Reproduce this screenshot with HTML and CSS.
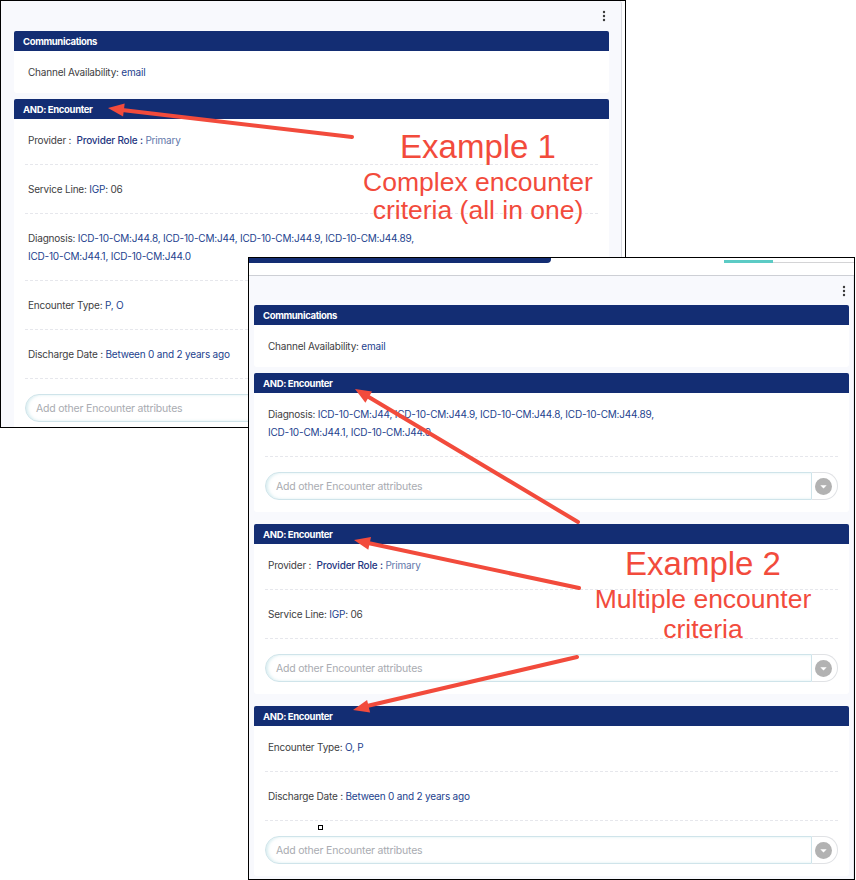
FILE: index.html
```html
<!DOCTYPE html>
<html lang="en">
<head>
<meta charset="utf-8">
<title>Encounter criteria examples</title>
<link rel="stylesheet" href="styles.css">
</head>
<body>
<div class="canvas">

  <div class="win win1">
    <div class="panel">
      <div class="toolbar">
        <svg class="kebab" width="4" height="12" viewBox="0 0 4 12"><circle cx="2" cy="2" r="1.2"/><circle cx="2" cy="6" r="1.2"/><circle cx="2" cy="10" r="1.2"/></svg>
      </div>
      <section class="card comm">
        <div class="card-head">Communications</div>
        <div class="card-body">
          <div class="row single">Channel Availability: <span class="v">email</span></div>
        </div>
      </section>
      <section class="card enc">
        <div class="card-head">AND: Encounter</div>
        <div class="card-body">
          <div class="row">Provider :&nbsp; <span class="v strong">Provider Role :</span> <span class="v light">Primary</span></div>
          <div class="row">Service Line: <span class="v">IGP</span>: 06</div>
          <div class="row">Diagnosis: <span class="v">ICD-10-CM:J44.8, ICD-10-CM:J44, ICD-10-CM:J44.9, ICD-10-CM:J44.89,<br>ICD-10-CM:J44.1, ICD-10-CM:J44.0</span></div>
          <div class="row">Encounter Type: <span class="v">P, O</span></div>
          <div class="row">Discharge Date : <span class="v">Between 0 and 2 years ago</span></div>
          <div class="attr">
            <div class="field">Add other Encounter attributes</div>
            <div class="drop"><svg width="17" height="17" viewBox="0 0 17 17"><circle cx="8.5" cy="8.5" r="8.5" fill="#b2b2b2"/><path d="M5.3 7.2h6.4l-3.2 3.4z" fill="#fff"/></svg></div>
          </div>
        </div>
      </section>
    </div>
  </div>

  <div class="win win2">
    <div class="strip">
      <div class="navybar"></div>
      <div class="tabs"><div class="tab-active"></div><div class="tab-rest"></div></div>
    </div>
    <div class="panel">
      <div class="toolbar t2">
        <svg class="kebab" width="4" height="12" viewBox="0 0 4 12"><circle cx="2" cy="2" r="1.2"/><circle cx="2" cy="6" r="1.2"/><circle cx="2" cy="10" r="1.2"/></svg>
      </div>
      <section class="card comm">
        <div class="card-head">Communications</div>
        <div class="card-body">
          <div class="row single">Channel Availability: <span class="v">email</span></div>
        </div>
      </section>
      <section class="card enc">
        <div class="card-head">AND: Encounter</div>
        <div class="card-body">
          <div class="row">Diagnosis: <span class="v">ICD-10-CM:J44, ICD-10-CM:J44.9, ICD-10-CM:J44.8, ICD-10-CM:J44.89,<br>ICD-10-CM:J44.1, ICD-10-CM:J44.0</span></div>
          <div class="attr">
            <div class="field">Add other Encounter attributes</div>
            <div class="drop"><svg width="17" height="17" viewBox="0 0 17 17"><circle cx="8.5" cy="8.5" r="8.5" fill="#b2b2b2"/><path d="M5.3 7.2h6.4l-3.2 3.4z" fill="#fff"/></svg></div>
          </div>
        </div>
      </section>
      <section class="card enc">
        <div class="card-head">AND: Encounter</div>
        <div class="card-body">
          <div class="row">Provider :&nbsp; <span class="v strong">Provider Role :</span> <span class="v light">Primary</span></div>
          <div class="row">Service Line: <span class="v">IGP</span>: 06</div>
          <div class="attr">
            <div class="field">Add other Encounter attributes</div>
            <div class="drop"><svg width="17" height="17" viewBox="0 0 17 17"><circle cx="8.5" cy="8.5" r="8.5" fill="#b2b2b2"/><path d="M5.3 7.2h6.4l-3.2 3.4z" fill="#fff"/></svg></div>
          </div>
        </div>
      </section>
      <section class="card enc">
        <div class="card-head">AND: Encounter</div>
        <div class="card-body">
          <div class="row">Encounter Type: <span class="v">O, P</span></div>
          <div class="row">Discharge Date : <span class="v">Between 0 and 2 years ago</span></div>
          <div class="attr">
            <div class="field">Add other Encounter attributes</div>
            <div class="drop"><svg width="17" height="17" viewBox="0 0 17 17"><circle cx="8.5" cy="8.5" r="8.5" fill="#b2b2b2"/><path d="M5.3 7.2h6.4l-3.2 3.4z" fill="#fff"/></svg></div>
          </div>
        </div>
      </section>
    </div>
  </div>

  <svg class="arrows" width="856" height="880" viewBox="0 0 856 880">
    <g stroke="#f24b3c" stroke-width="4" stroke-linecap="round" fill="none">
      <line x1="352" y1="137" x2="122" y2="110"/>
      <line x1="578" y1="522" x2="367" y2="396"/>
      <line x1="579" y1="588" x2="368" y2="543"/>
      <line x1="577" y1="657" x2="367" y2="706"/>
    </g>
    <g fill="#f24b3c">
      <polygon points="108,108 124.7,103.4 123.1,116.4"/>
      <polygon points="355,389 372,391.6 365.4,402.8"/>
      <polygon points="354,540 371,537 368.3,549.7"/>
      <polygon points="353,710 367.1,700 370.1,712.6"/>
    </g>
  </svg>

  <div class="note note1">
    <div class="big">Example 1</div>
    <div class="small">Complex encounter</div>
    <div class="small">criteria (all in one)</div>
  </div>
  <div class="note note2">
    <div class="big">Example 2</div>
    <div class="small">Multiple encounter</div>
    <div class="small">criteria</div>
  </div>

  <div class="marker"></div>
</div>
</body>
</html>
```

FILE: styles.css
```css
* { box-sizing: border-box; }

body {
  margin: 0;
  background: #ffffff;
  font-family: Inter, "Noto Sans", sans-serif;
}

.canvas {
  position: relative;
  width: 856px;
  height: 880px;
  overflow: hidden;
}

/* windows on the canvas */
.win {
  position: absolute;
  border: 1px solid #000;
  background: #fff;
  overflow: hidden;
}
.win1 { left: 0; top: 0; width: 626px; height: 428px; }
.win2 { left: 248px; top: 257px; width: 607px; height: 623px; }

.panel {
  background: #f8f9fd;
}
.win1 .panel {
  min-height: 100%;
  margin-right: 3px;
  border-right: 1px solid #d9dbe1;
  border-radius: 0 3px 0 0;
  padding: 0 12px 0 13px;
}
.win2 .panel {
  min-height: calc(100% - 18px);
  padding: 0 4px 0 5px;
  border-right: 1px solid #e6e7ec;
}

/* top strip of second window */
.strip {
  height: 18px;
  border-bottom: 1px solid #cdcfd5;
  display: flex;
  align-items: flex-start;
}
.navybar {
  width: 302px;
  height: 5px;
  background: #132d73;
  border-radius: 0 0 4px 0;
}
.tabs {
  flex: 1;
  margin-left: 173px;
  margin-top: 2px;
  height: 3px;
  display: flex;
  align-items: flex-end;
}
.tab-active { width: 49px; height: 3px; background: #5ccbc5; }
.tab-rest { flex: 1; height: 1px; background: #d4d4d6; }

.toolbar {
  height: 30px;
  display: flex;
  justify-content: flex-end;
  align-items: center;
  padding-right: 3px;
}
.toolbar.t2 { height: 29px; }
.kebab { fill: #3a3a3a; }

/* cards */
.card-head {
  height: 20px;
  background: #132d73;
  color: #fff;
  font-weight: 700;
  font-size: 9.5px;
  letter-spacing: -0.35px;
  padding-left: 9px;
  display: flex;
  align-items: center;
  border-radius: 2px 2px 0 0;
}
.card-body {
  background: #fff;
  padding: 0 11px 12px;
  border-radius: 0 0 3px 3px;
}
.card.comm { margin-bottom: 6px; }
.card.comm .card-body { padding: 0 11px; }
.card.enc + .card.enc { margin-top: 12px; }

.row {
  padding: 15px 3px;
  border-bottom: 1px dashed #e6e7ec;
  font-size: 10px;
  line-height: 18px;
  letter-spacing: -0.2px;
  color: #3e3e42;
}
.row:first-child { padding-top: 12px; }
.row.single { padding: 12px 3px; border-bottom: none; }

.v { color: #233f8e; }
.v.strong { color: #1f3782; font-weight: 500; }
.v.light { color: #6277aa; }

/* attribute selector */
.attr {
  margin-top: 15px;
  height: 28px;
  display: flex;
}
.field {
  flex: 1;
  border: 1px solid #cfe4ea;
  border-radius: 14px 0 0 14px;
  box-shadow: inset 2px 0 3px rgba(150, 205, 215, 0.35);
  padding-left: 10px;
  display: flex;
  align-items: center;
  font-size: 10.5px;
  letter-spacing: -0.2px;
  color: #a9abb1;
}
.drop {
  width: 26px;
  border: 1px solid #e0e2e5;
  border-left: none;
  border-radius: 0 14px 14px 0;
  display: flex;
  align-items: center;
  justify-content: center;
  padding-right: 2px;
}

/* annotations over the windows */
.arrows {
  position: absolute;
  left: 0;
  top: 0;
  pointer-events: none;
}
.note {
  position: absolute;
  width: 280px;
  text-align: center;
  color: #f24b3c;
  font-family: "Liberation Sans", Arial, sans-serif;
}
.note .big { font-size: 33px; }
.note .small { font-size: 26.5px; }
.note1 { left: 338px; top: 126px; }
.note1 .big { line-height: 42px; }
.note1 .small { line-height: 28px; }
.note2 { left: 563px; top: 543px; }
.note2 .big { line-height: 41px; }
.note2 .small { line-height: 30px; }

.marker {
  position: absolute;
  left: 318px;
  top: 825px;
  width: 5px;
  height: 5px;
  border: 1px solid #000;
  background: #fff;
}
```
